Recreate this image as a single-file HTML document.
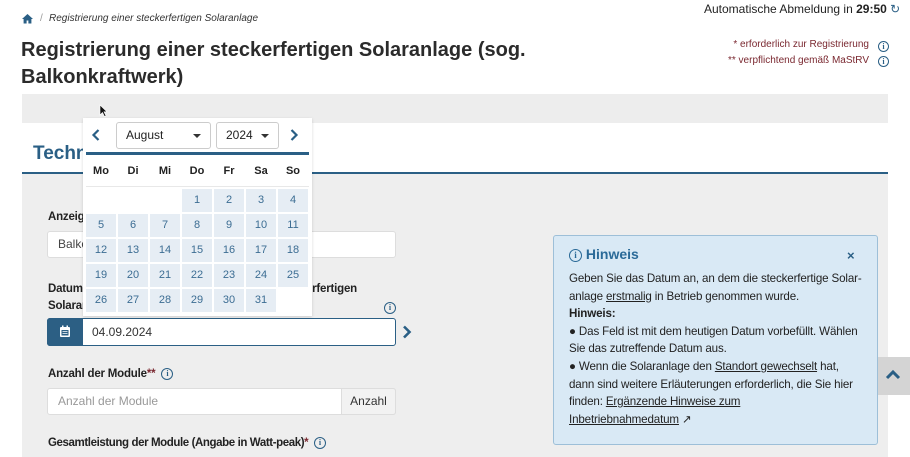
<!DOCTYPE html>
<html><head><meta charset="utf-8"><style>
*{box-sizing:border-box;margin:0;padding:0}
body{width:910px;height:457px;overflow:hidden;background:#fff;font-family:"Liberation Sans",sans-serif;color:#222;position:relative}
.a{position:absolute}
.lbl{font-size:11.5px;font-weight:bold;color:#222;letter-spacing:-0.2px;white-space:nowrap}
.info{display:inline-block;width:11px;height:11px;border:1.2px solid #2a5f85;border-radius:50%;font-size:8px;line-height:9px;text-align:center;color:#2a5f85;font-weight:bold;font-family:"Liberation Serif",serif;vertical-align:middle}
.cell{position:absolute;width:30px;height:23px;background:#e6edf4;color:#3c6d93;font-size:11px;text-align:center;line-height:23px}
.dh{position:absolute;width:30px;text-align:center;font-size:11px;font-weight:bold;top:165px}
.sel{position:absolute;border:1px solid #ccc;border-radius:3px;background:#fff;font-size:12px;height:27px;line-height:25px;padding-left:9px}
.sel:after{content:"";position:absolute;right:9px;top:11px;border:4px solid transparent;border-top:4px solid #333}
</style></head><body>
<svg class="a" style="left:21px;top:13px" width="13" height="11" viewBox="0 0 13 11"><path d="M6.5 1L1 6h1.6v4.5h3V7.5h1.8v3h3V6H12z" fill="#2a5f85"/></svg>
<div class="a" style="left:40px;top:13px;font-size:10px;color:#999">/</div>
<div class="a" style="left:49px;top:13px;font-size:10px;font-style:italic;color:#333">Registrierung einer steckerfertigen Solaranlage</div>
<div class="a" style="left:21px;top:37px;font-size:20px;font-weight:bold;line-height:27px;color:#2b2b2b;width:560px">Registrierung einer steckerfertigen Solaranlage (sog.<br>Balkonkraftwerk)</div>
<div class="a" style="left:704px;top:2px;font-size:12px;color:#222">Automatische Abmeldung in <b>29:50</b> <span style="color:#2a5f85">↻</span></div>
<div class="a" style="right:41px;top:37px;font-size:10px;color:#7a2830;text-align:right;line-height:16px">* erforderlich zur Registrierung<br>** verpflichtend gemäß MaStRV</div>
<div class="a" style="left:878px;top:38px"><span class="info">i</span></div>
<div class="a" style="left:878px;top:53px"><span class="info">i</span></div>
<div class="a" style="left:22px;top:94px;width:866px;height:29px;background:#ededed"></div>
<div class="a" style="left:33px;top:143px;font-size:19px;font-weight:bold;color:#2a5f85">Technische Daten</div>
<div class="a" style="left:22px;top:172px;width:866px;height:2px;background:#2a5f85"></div>
<div class="a" style="left:22px;top:174px;width:866px;height:283px;background:#eeeeee"></div>
<div class="a lbl" style="left:48px;top:211px">Anzeigename</div>
<div class="a" style="left:47px;top:231px;width:349px;height:27px;background:#fff;border:1px solid #ddd;border-radius:3px;font-size:12px;line-height:25px;padding-left:10px;color:#444">Balkonkraftwerk</div>
<div class="a lbl" style="left:48px;top:281px;line-height:17px">Datum der erstmaligen Inbetriebnahme der steckerfertigen<br>Solaranlage</div>
<div class="a" style="left:384px;top:299px"><span class="info" style="width:12px;height:12px">i</span></div>
<div class="a" style="left:47px;top:318px;width:349px;height:28px;border:1px solid #2a5f85;border-radius:3px;background:#fff"></div>
<div class="a" style="left:47px;top:318px;width:36px;height:28px;background:#2c5f84;border-radius:3px 0 0 3px"></div>
<svg class="a" style="left:59px;top:325px" width="12" height="13" viewBox="0 0 12 13"><rect x="1" y="2" width="10" height="10" rx="1" fill="#fff"/><rect x="2.5" y="5" width="7" height="5.5" fill="#2c5f84"/><rect x="3" y="0.5" width="1.5" height="3" fill="#fff"/><rect x="7.5" y="0.5" width="1.5" height="3" fill="#fff"/><path d="M3.5 6.5h5M3.5 8.5h5" stroke="#fff" stroke-width=".8"/></svg>
<div class="a" style="left:92px;top:325px;font-size:12px;color:#333">04.09.2024</div>
<svg class="a" style="left:402px;top:325px" width="10" height="14" viewBox="0 0 10 14"><path d="M2 1.5l5.5 5.5L2 12.5" stroke="#2a5f85" stroke-width="2.6" fill="none"/></svg>
<div class="a lbl" style="left:48px;top:368px">Anzahl der Module<span style="color:#7a2830">**</span> &nbsp;<span class="info" style="width:12px;height:12px">i</span></div>
<div class="a" style="left:47px;top:388px;width:349px;height:27px;background:#fff;border:1px solid #ddd;border-radius:3px;font-size:12px;line-height:25px;padding-left:10px;color:#999">Anzahl der Module</div>
<div class="a" style="left:341px;top:388px;width:55px;height:27px;background:#f2f2f2;border:1px solid #ddd;border-radius:0 3px 3px 0;font-size:12px;line-height:25px;text-align:center;color:#333">Anzahl</div>
<div class="a lbl" style="left:48px;top:437px;letter-spacing:-0.4px">Gesamtleistung der Module (Angabe in Watt-peak)<span style="color:#7a2830">*</span> &nbsp;<span class="info" style="width:12px;height:12px">i</span></div>

<div class="a" style="left:83px;top:118px;width:229px;height:198px;background:#fff;box-shadow:0 1px 3px rgba(0,0,0,.15)"></div>
<svg class="a" style="left:91px;top:128px" width="10" height="14" viewBox="0 0 10 14"><path d="M7.5 2L2.5 7l5 5" stroke="#2a5f85" stroke-width="2.2" fill="none"/></svg>
<div class="sel" style="left:116px;top:122px;width:95px">August</div>
<div class="sel" style="left:216px;top:122px;width:63px">2024</div>
<svg class="a" style="left:289px;top:128px" width="10" height="14" viewBox="0 0 10 14"><path d="M2.5 2l5 5-5 5" stroke="#2a5f85" stroke-width="2.2" fill="none"/></svg>
<div class="a" style="left:86px;top:152px;width:223px;height:3px;background:#2a5f85"></div>
<div class="dh" style="left:86px">Mo</div><div class="dh" style="left:118px">Di</div><div class="dh" style="left:150px">Mi</div><div class="dh" style="left:182px">Do</div><div class="dh" style="left:214px">Fr</div><div class="dh" style="left:246px">Sa</div><div class="dh" style="left:278px">So</div>
<div class="a" style="left:86px;top:186px;width:223px;height:1px;background:#e8e8e8"></div>
<div id="g"></div>
<script>
var h='',d=1;for(var r=0;r<5;r++)for(var c=0;c<7;c++){if(r==0&&c<3)continue;if(d>31)break;h+='<div class="cell" style="left:'+(86+c*32)+'px;top:'+(189+r*25)+'px">'+d+'</div>';d++;}
document.getElementById('g').innerHTML=h;
</script>
<svg class="a" style="left:99px;top:104px" width="10" height="14" viewBox="0 0 10 14"><path d="M1 1v10l2.5-2.5 2 4 1.5-.7-2-4H8z" fill="#111" stroke="#fff" stroke-width=".6"/></svg>

<div class="a" style="left:553px;top:235px;width:325px;height:210px;background:#d9e9f5;border:1px solid #9dbfd8;border-radius:3px"></div>
<div class="a" style="left:569px;top:246px;font-size:14px;font-weight:bold;color:#2a6a98"><span class="info" style="width:13px;height:13px;font-size:9px;line-height:11px;border-color:#2a6a98;color:#2a6a98">i</span> Hinweis</div>
<div class="a" style="left:847px;top:248px;font-size:13px;font-weight:bold;color:#2a5f85">×</div>
<div class="a" style="left:569px;top:270px;width:305px;font-size:11.6px;line-height:17.6px;color:#222;white-space:nowrap;letter-spacing:-0.15px">Geben Sie das Datum an, an dem die steckerfertige Solar-<br>anlage <u>erstmalig</u> in Betrieb genommen wurde.<br><b>Hinweis:</b><br>● Das Feld ist mit dem heutigen Datum vorbefüllt. Wählen<br>Sie das zutreffende Datum aus.<br>● Wenn die Solaranlage den <u>Standort gewechselt</u> hat,<br>dann sind weitere Erläuterungen erforderlich, die Sie hier<br>finden: <u>Ergänzende Hinweise zum</u><br><u>Inbetriebnahmedatum</u> ↗</div>
<div class="a" style="left:878px;top:357px;width:32px;height:38px;background:#d4d4d4"></div>
<svg class="a" style="left:885px;top:369px" width="16" height="11" viewBox="0 0 16 11"><path d="M2 9l6-6 6 6" stroke="#2a5f85" stroke-width="3" fill="none"/></svg>
</body></html>
